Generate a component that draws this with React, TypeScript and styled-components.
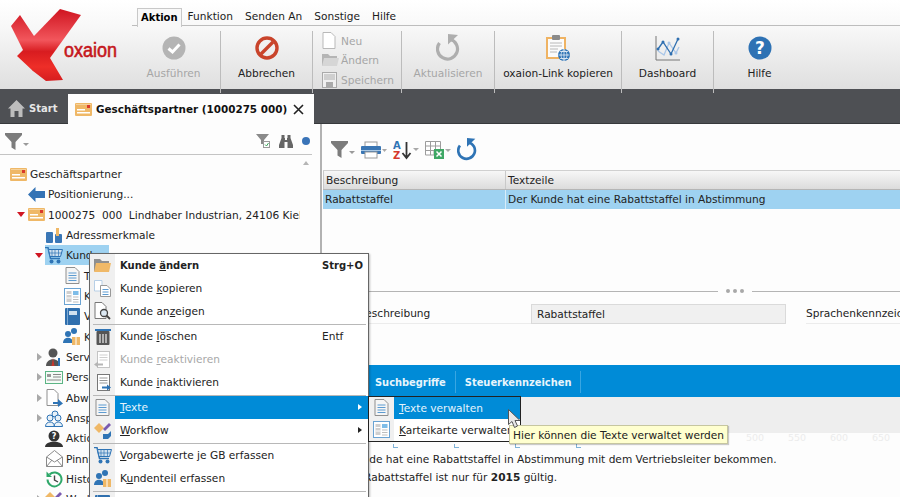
import React from 'react';
import styled, { createGlobalStyle } from 'styled-components';

const GlobalStyle = createGlobalStyle`
  html, body { margin: 0; padding: 0; background: #fdfdfd; }
  body { font-family: "DejaVu Sans", Verdana, sans-serif; font-size: 10.6px; color: #222; }
`;

const Page = styled.div`
  position: relative;
  width: 900px;
  height: 497px;
  overflow: hidden;
  background: #fdfdfd;
`;

/* ribbon */
const Ribbon = styled.div`
  display: flex;
  height: 89px;
  background: linear-gradient(#ffffff 0%, #f8f8f8 30%, #efefef 55%, #dfdfdf 100%);
`;
const LogoBox = styled.div`
  width: 132px;
  flex: none;
`;
const RibbonMain = styled.div`
  flex: 1;
  display: flex;
  flex-direction: column;
`;
const MenuTabs = styled.div`
  height: 26px;
  box-sizing: border-box;
  padding: 8px 0 0 5px;
  display: flex;
  border-bottom: 1px solid #bdbdbd;
`;
const MenuTab = styled.div<{ $active?: boolean }>`
  height: 18px;
  line-height: 17px;
  padding: 0 ${(p) => (p.$active ? '3px' : '6px')};
  font-weight: ${(p) => (p.$active ? 700 : 400)};
  font-size: ${(p) => (p.$active ? '10px' : '10.6px')};
  color: #1c1c1c;
  ${(p) =>
    p.$active &&
    `border: 1px solid #c8c8c8; border-bottom: 0; background: #f8f8f8; color: #000;`}
`;
const ToolRow = styled.div`
  flex: 1;
  display: flex;
  padding: 5px 0 4px;
`;
const Tool = styled.div<{ $width: number; $pr?: number; $off?: boolean }>`
  box-sizing: border-box;
  width: ${(p) => p.$width}px;
  padding: 3px ${(p) => p.$pr ?? 0}px 0 0;
  display: flex;
  flex-direction: column;
  align-items: center;
  color: ${(p) => (p.$off ? '#a6a6a6' : '#222')};
`;
const ToolIcon = styled.div`
  height: 27px;
  margin-bottom: 6px;
  display: flex;
  align-items: center;
  justify-content: center;
`;
const ToolSep = styled.div`
  width: 1px;
  background: #bcbcbc;
  flex: none;
`;
const SmallGroup = styled.div`
  width: 88px;
  padding: 0 0 3px 9px;
  box-sizing: border-box;
  display: flex;
  flex-direction: column;
  justify-content: center;
`;
const SmallTool = styled.div`
  height: 19.5px;
  flex: none;
  display: flex;
  align-items: center;
  color: #a6a6a6;
`;
const SmallIcon = styled.span`
  width: 19px;
  flex: none;
  display: flex;
`;

/* dark tab bar */
const TabBar = styled.div`
  height: 35px;
  box-sizing: border-box;
  background: #4e5054;
  border-bottom: 1px solid #37393c;
  display: flex;
  align-items: flex-end;
`;
const StartTab = styled.div`
  width: 68px;
  height: 30px;
  box-sizing: border-box;
  padding: 1px 0 0 8px;
  display: flex;
  align-items: center;
  gap: 4px;
  font-weight: 700;
  font-size: 10px;
  color: #e6e6e6;
`;
const DocTab = styled.div`
  width: 246px;
  height: 30px;
  margin-bottom: -1px;
  box-sizing: border-box;
  padding: 0 10px 0 7px;
  background: #fdfdfd;
  display: flex;
  align-items: center;
  gap: 4px;
  font-weight: 700;
  font-size: 10.4px;
  color: #111;
`;
const DocTitle = styled.span`
  flex: 1;
  white-space: nowrap;
`;

/* body */
const Body = styled.div`
  display: flex;
  height: 373px;
`;
const LeftPane = styled.div`
  width: 320px;
  flex: none;
  border-right: 2px solid #b2b2b2;
  position: relative;
`;
const LeftBar = styled.div`
  height: 31px;
  box-sizing: border-box;
  margin-right: 8px;
  border-bottom: 1px solid #c4c4c4;
  padding: 4px 2px 0 5px;
  display: flex;
  align-items: center;
  gap: 9px;
`;
const Grow = styled.div`
  flex: 1;
`;
const Dot = styled.span`
  width: 8px;
  height: 8px;
  margin-left: 0;
  border-radius: 50%;
  background: #3a74b8;
`;
const ScrollUp = styled.span`
  position: absolute;
  left: 303px;
  top: 37px;
  width: 0;
  height: 0;
  border: 3.5px solid transparent;
  border-top: 0;
  border-bottom: 4px solid #b5b5b5;
`;
const Tree = styled.div`
  width: 300px;
  overflow: hidden;
  padding-top: 9px;
`;
const TreeRow = styled.div<{ $level: number }>`
  height: 20.33px;
  padding-left: ${(p) => p.$level * 18}px;
  display: flex;
  align-items: center;
  white-space: pre;
`;
const TwistSlot = styled.span`
  width: 9px;
  flex: none;
  display: flex;
`;
const Twist = styled.span<{ $open?: boolean }>`
  width: 0;
  height: 0;
  ${(p) =>
    p.$open
      ? `border: 4px solid transparent; border-top: 5px solid #d01622; border-bottom: 0; margin-left: -1px;`
      : `border: 4px solid transparent; border-left: 5px solid #a9a9a9; border-right: 0; margin-left: 1px;`}
`;
const TreeCell = styled.span<{ $sel?: boolean }>`
  display: flex;
  align-items: center;
  height: 20px;
  ${(p) => p.$sel && `background: #9ed2f1; padding-right: 10px;`}
`;
const TreeIcon = styled.span`
  width: 18px;
  flex: none;
  display: flex;
  justify-content: center;
`;
const TreeLabel = styled.span`
  margin-left: 3px;
`;

const RightPane = styled.div`
  flex: 1;
  min-width: 0;
  overflow: hidden;
  display: flex;
  flex-direction: column;
`;
const ListBar = styled.div`
  height: 46px;
  box-sizing: border-box;
  padding: 5px 0 0 9px;
  display: flex;
  align-items: center;
  gap: 6px;
`;
const ListPane = styled.div`
  height: 115px;
  flex: none;
`;
const GridHead = styled.div`
  display: grid;
  grid-template-columns: 182px 1fr;
  height: 20px;
  box-sizing: border-box;
  border-top: 1px solid #d0d0d0;
  border-bottom: 1px solid #b5b5b5;
  margin-left: 1px;
  background: linear-gradient(#f7f7f7, #dcdcdc);
`;
const HeadCell = styled.div`
  padding-left: 2px;
  line-height: 18px;
  border-left: 1px solid #c9c9c9;
`;
const GridRow = styled.div`
  display: grid;
  grid-template-columns: 182px 1fr;
  height: 19px;
  margin-left: 1px;
  background: #9ed2f1;
`;
const RowCell = styled.div`
  padding-left: 2px;
  line-height: 18px;
  & + & { border-left: 1px solid #d8ecf8; }
`;
const Splitter = styled.div`
  height: 12px;
  flex: none;
  display: flex;
  align-items: center;
  gap: 7px;
  &::before, &::after {
    content: '';
    height: 1px;
    background: #b4b4b4;
  }
  &::before { width: 396px; }
  &::after { flex: 1; }
`;
const SplitDots = styled.div`
  display: flex;
  gap: 3px;
  padding: 0 1px;
`;
const SplitDot = styled.span`
  width: 4px;
  height: 4px;
  border-radius: 50%;
  background: #a8a8a8;
`;
const FormPane = styled.div`
  height: 68px;
  flex: none;
  padding: 7px 0 0 36px;
  box-sizing: border-box;
  display: flex;
  align-items: flex-start;
  white-space: nowrap;
`;
const FormLabel = styled.div`
  width: 173px;
  flex: none;
  height: 19px;
  line-height: 19px;
  border-bottom: 1px solid #ececec;
`;
const FormValue = styled.div`
  width: 255px;
  flex: none;
  height: 20px;
  box-sizing: border-box;
  line-height: 18px;
  padding-left: 5px;
  background: #f0f0f0;
  border: 1px solid #dadada;
  margin-right: 20px;
`;
const BlueTabs = styled.div`
  height: 32px;
  flex: none;
  box-sizing: border-box;
  padding: 6px 0 4px 44px;
  background: #008bd7;
  display: flex;
`;
const BlueTab = styled.div`
  padding: 0 9px 0 9px;
  line-height: 23px;
  font-weight: 700;
  font-size: 9.9px;
  color: #e8f5fc;
  border-right: 1px solid #39a6e2;
`;
const EditorBar = styled.div`
  height: 36px;
  flex: none;
  background: #eeeeee;
`;
const Ruler = styled.div`
  height: 15px;
  flex: none;
  display: grid;
  overflow: hidden;
`;
const RulerNums = styled.div`
  grid-area: 1 / 1;
  padding-left: 412px;
  display: flex;
`;
const RulerNum = styled.span`
  width: 42px;
  flex: none;
  text-align: center;
  font-size: 9.5px;
  line-height: 10px;
  color: #ececec;
`;
const RulerStops = styled.div`
  grid-area: 1 / 1;
  padding: 11px 0 0 71px;
  display: flex;
`;
const RulerStop = styled.span`
  width: 4px;
  height: 3px;
  margin-right: 56px;
  flex: none;
  border-left: 1px solid #7fb2d8;
  border-bottom: 1px solid #7fb2d8;
`;
const Editor = styled.div`
  padding: 2px 0 0 5px;
  line-height: 18px;
  white-space: nowrap;
`;
const EditorLine = styled.div<{ $indent?: number }>`
  padding-left: ${(p) => p.$indent ?? 0}px;
`;

/* context menu */
const Menu = styled.div`
  position: absolute;
  left: 89px;
  top: 253px;
  width: 280px;
  box-sizing: border-box;
  background: #fff;
  border: 1px solid #666;
  box-shadow: 1px 1px 2px rgba(0, 0, 0, 0.25);
  background-image: linear-gradient(90deg, #f0f0f0 25px, transparent 25px);
`;
const SubMenu = styled.div`
  position: absolute;
  left: 368px;
  top: 396px;
  width: 153px;
  box-sizing: border-box;
  background: #fff;
  border: 1px solid #222;
  background-image: linear-gradient(90deg, #f0f0f0 25px, transparent 25px);
`;
const Item = styled.div<{ $sel?: boolean; $off?: boolean; $bold?: boolean }>`
  position: relative;
  height: 23px;
  box-sizing: border-box;
  padding-bottom: 1px;
  display: flex;
  align-items: center;
  white-space: nowrap;
  font-weight: ${(p) => (p.$bold ? 700 : 400)};
  font-size: ${(p) => (p.$bold ? '10px' : '10.6px')};
  color: ${(p) => (p.$off ? '#a8a8a8' : p.$sel ? '#e6f4fc' : '#222')};
  background-image: ${(p) =>
    p.$sel ? 'linear-gradient(90deg, transparent 25px, #008bd7 25px)' : 'none'};
`;
const SubItem = styled(Item)`
  height: 22px;
`;
const ItemIcon = styled.span`
  width: 25px;
  flex: none;
  display: flex;
  justify-content: center;
`;
const ItemText = styled.span`
  margin-left: 5px;
  width: 202px;
  flex: none;
`;
const Arrow = styled.span<{ $sel?: boolean }>`
  position: absolute;
  right: 6px;
  top: 8px;
  width: 0;
  height: 0;
  border: 3.5px solid transparent;
  border-right: 0;
  border-left: 4px solid ${(p) => (p.$sel ? '#fff' : '#222')};
`;
const MenuSep = styled.div`
  height: 2px;
  display: flex;
  align-items: center;
  padding: 0 2px 0 3px;
  &::before {
    content: '';
    flex: 1;
    height: 1px;
    background: #b8b8b8;
  }
`;
const Tooltip = styled.div`
  position: absolute;
  left: 509px;
  top: 425px;
  height: 19px;
  box-sizing: border-box;
  padding: 0 3px 0 3px;
  line-height: 18px;
  background: #ffffcf;
  border: 1px solid #c6c6a0;
  box-shadow: 1px 1px 1px rgba(0, 0, 0, 0.2);
  white-space: nowrap;
`;
const Pointer = styled.div`
  position: absolute;
  left: 508px;
  top: 409px;
  display: flex;
`;

/* icons */
const Logo = () => (
  <svg width="132" height="89" viewBox="0 0 132 89">
    <defs>
      <linearGradient id="lgx" x1="0" y1="0" x2="0" y2="89" gradientUnits="userSpaceOnUse">
        <stop offset="0.1" stopColor="#cf1420" />
        <stop offset="0.45" stopColor="#f2565c" />
        <stop offset="0.58" stopColor="#d81c20" />
        <stop offset="0.75" stopColor="#ee2e28" />
        <stop offset="1" stopColor="#c8141a" />
      </linearGradient>
    </defs>
    <path d="M11 26 L20 15 L34 36 L50 58 L63 80 L46 81 L33 71 L17 56 L23 50 Z" fill="url(#lgx)" />
    <path d="M60 9 L81 15 L50 58 L39 72 L33 71 L23 50 L34 36 Z" fill="url(#lgx)" />
    <text
      x="64"
      y="57"
      fontFamily="Liberation Sans, sans-serif"
      fontSize="20"
      fill="#c5161c"
      stroke="#c5161c"
      strokeWidth="0.6"
      textLength="53"
      lengthAdjust="spacingAndGlyphs"
    >
      oxaion
    </text>
  </svg>
);
const CheckCircle = () => (
  <svg width="24" height="24" viewBox="0 0 24 24">
    <circle cx="12" cy="12" r="11.5" fill="#b4b4b4" />
    <path d="M6.5 12.5l4 3.5 7-7.5" fill="none" stroke="#fff" strokeWidth="3" />
  </svg>
);
const StopCircle = () => (
  <svg width="24" height="24" viewBox="0 0 24 24">
    <circle cx="12" cy="12" r="10" fill="none" stroke="#c9442b" strokeWidth="3.4" />
    <path d="M6 18L18 6" stroke="#c9442b" strokeWidth="3.4" />
  </svg>
);
const Refresh = ({ size, color }: { size: number; color: string }) => (
  <svg width={size} height={(size * 27) / 24} viewBox="0 0 24 27">
    <path d="M14 5.300A10 10 0 1 1 3.500 9" fill="none" stroke={color} strokeWidth="3.2" />
    <path d="M12 0L22 1L12 10.500Z" fill={color} />
  </svg>
);
const Clipboard = () => (
  <svg width="26" height="28" viewBox="0 0 26 28">
    <rect x="1" y="3" width="20" height="22" fill="#efb363" />
    <rect x="3" y="5" width="16" height="18" fill="#fbfbfb" />
    <rect x="7" y="1" width="8" height="5" rx="1" fill="#8a8a8a" />
    <path d="M5 9h12M5 12h12M5 15h8M5 18h7" stroke="#b8b8b8" />
    <circle cx="19" cy="21" r="6" fill="#2f74b5" />
    <path d="M13.5 21h11M19 15.5v11M15 17.5h8M15 24.500h8M19 15.500c-4 3-4 8 0 11M19 15.500c4 3 4 8 0 11" stroke="#fff" strokeWidth="0.7" fill="none" />
  </svg>
);
const Chart = () => (
  <svg width="26" height="26" viewBox="0 0 26 26">
    <path d="M1 1V25H25" fill="none" stroke="#777" />
    <path d="M3 16L9 20L14 8L21 18L24 12" fill="none" stroke="#a9c6e8" strokeWidth="1.3" />
    <path d="M3 14L8 7L16 19L23 4" fill="none" stroke="#2f6fb0" strokeWidth="1.3" />
    <circle cx="3" cy="14" r="1.5" fill="#2f6fb0" />
    <circle cx="8" cy="7" r="1.500" fill="#2f6fb0" />
    <circle cx="16" cy="19" r="1.500" fill="#2f6fb0" />
    <circle cx="23" cy="4" r="1.500" fill="#2f6fb0" />
    <circle cx="21" cy="18" r="1.500" fill="#a9c6e8" />
    <circle cx="14" cy="8" r="1.500" fill="#a9c6e8" />
  </svg>
);
const HelpCircle = () => (
  <svg width="24" height="24" viewBox="0 0 24 24">
    <circle cx="12" cy="12" r="11.500" fill="#2e72b4" />
    <text x="12" y="18" textAnchor="middle" fontFamily="DejaVu Sans, sans-serif" fontWeight="700" fontSize="17" fill="#fff">
      ?
    </text>
  </svg>
);
const SmallDoc = () => (
  <svg width="14" height="17" viewBox="0 0 14 17">
    <path d="M1 .5H9L13 4.500V16.500H1Z" fill="#fff" stroke="#b9b9b9" />
  </svg>
);
const SmallFolder = () => (
  <svg width="17" height="14" viewBox="0 0 17 14">
    <path d="M0 1H6L8 3H15V13H0Z" fill="#b5b5b5" />
    <path d="M2 5H17L15 13H0Z" fill="#d6d6d6" />
  </svg>
);
const SmallSave = () => (
  <svg width="15" height="16" viewBox="0 0 15 16">
    <rect x=".5" y=".5" width="14" height="15" fill="#f0f0f0" stroke="#aaa" />
    <rect x="2" y="2" width="11" height="6" fill="#cfcfcf" />
    <rect x="4" y="10" width="7" height="5" fill="#aaa" />
  </svg>
);
const House = () => (
  <svg width="17" height="17" viewBox="0 0 17 17">
    <path d="M8.500 0L17 8.500H14.500V17H10.500V11H6.500V17H2.500V8.500H0Z" fill="#bdbdbd" />
  </svg>
);
const Card = () => (
  <svg width="17" height="13" viewBox="0 0 17 13">
    <rect width="17" height="13" rx="1" fill="#efb867" />
    <rect x="1" y="1" width="15" height="1" fill="#f6d29c" />
    <rect x="2" y="6" width="8" height="1.500" fill="#fff" />
    <rect x="2" y="9" width="13" height="1.500" fill="#fff" />
    <rect x="12" y="2" width="3" height="3" fill="#d93a2b" />
  </svg>
);
const CloseX = () => (
  <svg width="11" height="11" viewBox="0 0 11 11">
    <path d="M1 1L10 10M10 1L1 10" stroke="#222" strokeWidth="1.600" />
  </svg>
);
const Funnel = ({ size = 17 }: { size?: number }) => (
  <svg width={size + 7} height={size} viewBox="0 0 24 17">
    <path d="M0 0H17V2L10.500 9V17L6.500 14.500V9L0 2Z" fill="#7c7c7c" />
    <path d="M18 10H24L21 13Z" fill="#9a9a9a" />
  </svg>
);
const FilterCheck = () => (
  <svg width="14" height="14" viewBox="0 0 14 14">
    <path d="M0 0H13L8 6V10H5V6Z" fill="#8a8a8a" />
    <rect x="7.500" y="7.500" width="6" height="6" fill="#fff" stroke="#9a9a9a" />
    <path d="M9 10.500l1.500 1.500 2-3" fill="none" stroke="#3ba55c" />
  </svg>
);
const Binoculars = () => (
  <svg width="14" height="14" viewBox="0 0 14 14">
    <path d="M2.500 1H5.500V4H6V6H8V4H8.500V1H11.500V4L14 11V14H8.500V8H5.500V14H0V11L2.500 4Z" fill="#666" />
  </svg>
);
const Printer = () => (
  <svg width="26" height="18" viewBox="0 0 26 18">
    <rect x="4" y="1" width="12" height="5" fill="#fff" stroke="#999" />
    <rect x="0" y="5" width="20" height="8" rx="1" fill="#3a76b4" />
    <rect x="0" y="9" width="20" height="1" fill="#a9c8e4" />
    <rect x="4" y="11" width="12" height="6" fill="#fff" stroke="#999" />
    <path d="M21 8H26L23.500 11Z" fill="#a8a8a8" />
  </svg>
);
const SortAz = () => (
  <svg width="26" height="20" viewBox="0 0 26 20">
    <text x="0" y="9" fontFamily="DejaVu Sans, sans-serif" fontWeight="700" fontSize="10" fill="#2f74b5">
      A
    </text>
    <text x="0" y="19" fontFamily="DejaVu Sans, sans-serif" fontWeight="700" fontSize="10" fill="#d5392b">
      Z
    </text>
    <path d="M13.500 2V17M9.500 13L13.500 18L17.500 13" fill="none" stroke="#333" strokeWidth="1.800" />
    <path d="M20 8H26L23 11Z" fill="#a8a8a8" />
  </svg>
);
const ExcelGrid = () => (
  <svg width="26" height="18" viewBox="0 0 26 18">
    <path d="M.5 .5H15.500V10H9V14H.5ZM5.500 .5V14M10.500 .5V10M.5 5H15.500M.5 9.500H9" fill="#fff" stroke="#9c9c9c" />
    <rect x="9" y="8" width="10" height="10" fill="#3fa765" />
    <path d="M11.500 10.500L16.500 15.500M16.500 10.500L11.500 15.500" stroke="#fff" strokeWidth="1.500" />
    <path d="M20 8H26L23 11Z" fill="#a8a8a8" />
  </svg>
);
const LeftArrow = () => (
  <svg width="17" height="15" viewBox="0 0 17 15">
    <path d="M0 7.500L7.500 0V4H17V11H7.500V15Z" fill="#3473b5" />
  </svg>
);
const Books = () => (
  <svg width="16" height="15" viewBox="0 0 16 15">
    <rect x="0" y="4" width="7" height="11" rx="1" fill="#3a77b6" />
    <rect x="9" y="6" width="7" height="9" rx="1" fill="#3a77b6" />
    <rect x="10" y="0" width="3" height="8" fill="#efb867" />
  </svg>
);
const Cart = () => (
  <svg width="18" height="17" viewBox="0 0 18 17">
    <path d="M0 .5H3L5.500 11.500H15" fill="none" stroke="#2f74b5" strokeWidth="1.500" />
    <path d="M3.500 2.500H17.500L15.500 9.500H5Z" fill="#cfe0ef" stroke="#2f74b5" />
    <path d="M7 3V9M10 3V9M13.500 3V9M4 6H17" stroke="#2f74b5" strokeWidth="0.700" />
    <circle cx="6.500" cy="14.500" r="2" fill="#2f74b5" />
    <circle cx="13.500" cy="14.500" r="2" fill="#2f74b5" />
  </svg>
);
const TextDoc = () => (
  <svg width="15" height="17" viewBox="0 0 15 17">
    <path d="M1 .5H10L14 4.500V16.500H1Z" fill="#f5f5f5" stroke="#8f8f8f" />
    <path d="M3.500 6H11.500M3.500 8.500H11.500M3.500 11H11.500M3.500 13.500H11.500" stroke="#5c9bd1" />
  </svg>
);
const CardDoc = () => (
  <svg width="17" height="17" viewBox="0 0 17 17">
    <rect x=".5" y=".5" width="16" height="16" fill="#fff" stroke="#6aa3d3" />
    <rect x="2.500" y="3" width="5" height="11" fill="#cfcfcf" />
    <path d="M2.500 6.500h5M2.500 10h5" stroke="#fff" />
    <rect x="9" y="3" width="5.500" height="4" fill="#7fbde8" />
    <path d="M9 9h5.500M9 11.500h5.500M9 14h5.500" stroke="#bdbdbd" />
  </svg>
);
const BlueBook = () => (
  <svg width="15" height="17" viewBox="0 0 15 17">
    <rect x="0" y="0" width="15" height="17" rx="1" fill="#2f6fae" />
    <rect x="4" y="3" width="8" height="4" fill="#cfe0ef" />
    <rect x="2" y="0" width="1" height="17" fill="#7ea9d2" />
  </svg>
);
const PeopleGift = () => (
  <svg width="18" height="17" viewBox="0 0 18 17">
    <circle cx="5" cy="6" r="3" fill="#2f74b5" />
    <path d="M0 15c0-7 10-7 10 0Z" fill="#2f74b5" />
    <circle cx="11" cy="3" r="3" fill="#2f74b5" />
    <rect x="9" y="9" width="8" height="8" fill="#efb867" />
    <path d="M13 9V17" stroke="#fff" />
  </svg>
);
const ServiceMan = () => (
  <svg width="18" height="18" viewBox="0 0 18 18">
    <circle cx="8" cy="5" r="4.500" fill="#555" />
    <path d="M1 18c0-9 14-9 14 0Z" fill="#555" />
    <path d="M8 10l-1.500 8h3Z" fill="#c8362b" />
    <path d="M14 10v8" stroke="#2f74b5" strokeWidth="2" />
  </svg>
);
const GreenCard = () => (
  <svg width="18" height="13" viewBox="0 0 18 13">
    <rect x=".5" y=".5" width="17" height="12" fill="#f4fbf6" stroke="#5cb585" />
    <rect x="2" y="3" width="4" height="3" fill="#999" />
    <path d="M8 3.500h8M8 6h8M2 9h14" stroke="#888" />
  </svg>
);
const DocArrow = () => (
  <svg width="17" height="18" viewBox="0 0 17 18">
    <path d="M1 .5H8L12 4.500V16.500H1Z" fill="#fff" stroke="#8f8f8f" />
    <path d="M7 13h5V10l5 4.500-5 3.500v-3H7Z" fill="#2f74b5" />
  </svg>
);
const PeopleOutline = () => (
  <svg width="18" height="17" viewBox="0 0 18 17">
    <circle cx="10" cy="4" r="3" fill="#e8f1f8" stroke="#2f74b5" />
    <circle cx="5" cy="8" r="3" fill="#e8f1f8" stroke="#2f74b5" />
    <circle cx="13" cy="8" r="3" fill="#e8f1f8" stroke="#2f74b5" />
    <path d="M.5 16.500c0-6 9-6 9 0ZM9 16.500c0-6 8.500-6 8.500 0Z" fill="#e8f1f8" stroke="#2f74b5" />
  </svg>
);
const DarkPerson = () => (
  <svg width="18" height="17" viewBox="0 0 18 17">
    <circle cx="9" cy="6" r="5.500" fill="#333" />
    <path d="M0 17c0-7 18-7 18 0Z" fill="#333" />
    <text x="9" y="9" textAnchor="middle" fontFamily="DejaVu Sans, sans-serif" fontSize="8" fontWeight="700" fill="#fff">
      ?
    </text>
  </svg>
);
const OpenMail = () => (
  <svg width="17" height="17" viewBox="0 0 17 17">
    <path d="M.5 7L8.500 .5L16.500 7V16.500H.5Z" fill="#fff" stroke="#8a8a8a" />
    <path d="M.5 7L8.500 12L16.500 7M.5 16.500L6 10M16.500 16.500L11 10" fill="none" stroke="#8a8a8a" />
  </svg>
);
const HistoryClock = () => (
  <svg width="17" height="17" viewBox="0 0 17 17">
    <path d="M3.500 3.500A7 7 0 1 1 1.500 8.500" fill="none" stroke="#2fa86a" strokeWidth="2" />
    <path d="M.5 .5V6H6Z" fill="#2fa86a" />
    <path d="M8.500 4.500V9L12 11" fill="none" stroke="#444" strokeWidth="1.400" />
  </svg>
);
const Workflow = () => (
  <svg width="18" height="17" viewBox="0 0 18 17">
    <path d="M0 6L5 1L10 6L5 11Z" fill="#efb867" />
    <path d="M9 7L15 1L17 3L11 9Z" fill="#7a5bb0" />
    <path d="M9 12H14L17 9V14L14 17H9Z" fill="#2f74b5" />
  </svg>
);
const OpenFolder = () => (
  <svg width="17" height="14" viewBox="0 0 17 14">
    <path d="M0 1H6L8 3H15V13H0Z" fill="#8f8f8f" />
    <path d="M2 5H17L15 14H0Z" fill="#f0b968" />
  </svg>
);
const CopyDocs = () => (
  <svg width="17" height="17" viewBox="0 0 17 17">
    <path d="M.5 .5H8V11H.5Z" fill="#fff" stroke="#b7cfe6" />
    <path d="M6.500 5.500H13L16.500 9V16.500H6.500Z" fill="#fff" stroke="#999" />
    <path d="M8.500 9.500H14.500M8.500 12H14.500M8.500 14.500H14.500" stroke="#5c9bd1" />
  </svg>
);
const DocSearch = () => (
  <svg width="17" height="18" viewBox="0 0 17 18">
    <path d="M1 .5H8L12 4.500V16.500H1Z" fill="#fff" stroke="#777" />
    <circle cx="10" cy="11" r="3.500" fill="#dce9f4" stroke="#444" strokeWidth="1.300" />
    <path d="M12.500 13.500L16 17" stroke="#444" strokeWidth="1.800" />
  </svg>
);
const Trash = () => (
  <svg width="16" height="17" viewBox="0 0 16 17">
    <rect x="0" y="1" width="16" height="2" fill="#2f74b5" />
    <rect x="1.500" y="3" width="13" height="14" rx="1" fill="#555" />
    <path d="M5 6V15M8 6V15M11 6V15" stroke="#eee" strokeWidth="1.200" />
  </svg>
);
const DocBack = ({ off }: { off?: boolean }) => (
  <svg width="17" height="17" viewBox="0 0 17 17">
    <rect x="3.500" y=".5" width="12" height="16" fill="#fff" stroke={off ? '#c4c4c4' : '#777'} />
    <path d="M5.500 4H13.500M5.500 6.500H13.500M5.500 9H13.500" stroke={off ? '#cfcfcf' : '#999'} />
    <path d={off ? 'M0 13.500L4 10.500V12.500H9V14.500H4V16.500Z' : 'M8 12.500H13V10.500L17 13.500L13 16.500V14.500H8Z'} fill={off ? '#b5b5b5' : '#2f74b5'} />
  </svg>
);

const Mouse = () => (
  <svg width="14" height="21" viewBox="0 0 14 21">
    <path d="M.5 .5V15.500L4 12.500L6.500 18.500L9.500 17L7 11.500H12Z" fill="#e8e8e8" stroke="#555" />
  </svg>
);

const treeRows: { level: number; icon: React.ReactNode; label: string; twist?: 'open' | 'closed'; sel?: boolean }[] = [
  { level: 0, icon: <Card />, label: 'Geschäftspartner' },
  { level: 1, icon: <LeftArrow />, label: 'Positionierung...' },
  { level: 1, icon: <Card />, label: '1000275  000  Lindhaber Industrian, 24106 Kiel', twist: 'open' },
  { level: 2, icon: <Books />, label: 'Adressmerkmale' },
  { level: 2, icon: <Cart />, label: 'Kunde', twist: 'open', sel: true },
  { level: 3, icon: <TextDoc />, label: 'Texte' },
  { level: 3, icon: <CardDoc />, label: 'Karteikarte' },
  { level: 3, icon: <BlueBook />, label: 'Vorgabewerte' },
  { level: 3, icon: <PeopleGift />, label: 'Kundenteil' },
  { level: 2, icon: <ServiceMan />, label: 'Servicepartner', twist: 'closed' },
  { level: 2, icon: <GreenCard />, label: 'Personenkonto', twist: 'closed' },
  { level: 2, icon: <DocArrow />, label: 'Abweichende Anschrift', twist: 'closed' },
  { level: 2, icon: <PeopleOutline />, label: 'Ansprechpartner', twist: 'closed' },
  { level: 2, icon: <DarkPerson />, label: 'Aktionen' },
  { level: 2, icon: <OpenMail />, label: 'Pinnwand' },
  { level: 2, icon: <HistoryClock />, label: 'Historie' },
  { level: 2, icon: <Workflow />, label: 'Workflow', twist: 'closed' },
];

export default function App() {
  return (
    <Page>
      <GlobalStyle />
      <Ribbon>
        <LogoBox>
          <Logo />
        </LogoBox>
        <RibbonMain>
          <MenuTabs>
            <MenuTab $active>Aktion</MenuTab>
            <MenuTab>Funktion</MenuTab>
            <MenuTab>Senden An</MenuTab>
            <MenuTab>Sonstige</MenuTab>
            <MenuTab>Hilfe</MenuTab>
          </MenuTabs>
          <ToolRow>
            <Tool $width={88} $pr={5} $off>
              <ToolIcon>
                <CheckCircle />
              </ToolIcon>
              Ausführen
            </Tool>
            <ToolSep />
            <Tool $width={91}>
              <ToolIcon>
                <StopCircle />
              </ToolIcon>
              Abbrechen
            </Tool>
            <ToolSep />
            <SmallGroup>
              <SmallTool>
                <SmallIcon>
                  <SmallDoc />
                </SmallIcon>
                Neu
              </SmallTool>
              <SmallTool>
                <SmallIcon>
                  <SmallFolder />
                </SmallIcon>
                Ändern
              </SmallTool>
              <SmallTool>
                <SmallIcon>
                  <SmallSave />
                </SmallIcon>
                Speichern
              </SmallTool>
            </SmallGroup>
            <ToolSep />
            <Tool $width={92} $off>
              <ToolIcon>
                <Refresh size={24} color="#aeaeae" />
              </ToolIcon>
              Aktualisieren
            </Tool>
            <ToolSep />
            <Tool $width={126}>
              <ToolIcon>
                <Clipboard />
              </ToolIcon>
              oxaion-Link kopieren
            </Tool>
            <ToolSep />
            <Tool $width={91}>
              <ToolIcon>
                <Chart />
              </ToolIcon>
              Dashboard
            </Tool>
            <ToolSep />
            <Tool $width={91}>
              <ToolIcon>
                <HelpCircle />
              </ToolIcon>
              Hilfe
            </Tool>
          </ToolRow>
        </RibbonMain>
      </Ribbon>

      <TabBar>
        <StartTab>
          <House />
          Start
        </StartTab>
        <DocTab>
          <Card />
          <DocTitle>Geschäftspartner (1000275 000)</DocTitle>
          <CloseX />
        </DocTab>
      </TabBar>

      <Body>
        <LeftPane>
          <LeftBar>
            <Funnel size={17} />
            <Grow />
            <FilterCheck />
            <Binoculars />
            <Dot />
          </LeftBar>
          <ScrollUp />
          <Tree>
            {treeRows.map((r) => (
              <TreeRow key={r.label} $level={r.level}>
                <TwistSlot>{r.twist && <Twist $open={r.twist === 'open'} />}</TwistSlot>
                <TreeCell $sel={r.sel}>
                  <TreeIcon>{r.icon}</TreeIcon>
                  <TreeLabel>{r.label}</TreeLabel>
                </TreeCell>
              </TreeRow>
            ))}
          </Tree>
        </LeftPane>

        <RightPane>
          <ListBar>
            <Funnel size={17} />
            <Printer />
            <SortAz />
            <ExcelGrid />
            <Refresh size={20} color="#2f74b5" />
          </ListBar>
          <ListPane>
            <GridHead>
              <HeadCell>Beschreibung</HeadCell>
              <HeadCell>Textzeile</HeadCell>
            </GridHead>
            <GridRow>
              <RowCell>Rabattstaffel</RowCell>
              <RowCell>Der Kunde hat eine Rabattstaffel in Abstimmung</RowCell>
            </GridRow>
          </ListPane>
          <Splitter>
            <SplitDots>
              <SplitDot />
              <SplitDot />
              <SplitDot />
            </SplitDots>
          </Splitter>
          <FormPane>
            <FormLabel>Beschreibung</FormLabel>
            <FormValue>Rabattstaffel</FormValue>
            <FormLabel>Sprachenkennzeichen</FormLabel>
          </FormPane>
          <BlueTabs>
            <BlueTab>Suchbegriffe</BlueTab>
            <BlueTab>Steuerkennzeichen</BlueTab>
          </BlueTabs>
          <EditorBar />
          <Ruler>
            <RulerNums>
              <RulerNum>500</RulerNum>
              <RulerNum>550</RulerNum>
              <RulerNum>600</RulerNum>
              <RulerNum>650</RulerNum>
            </RulerNums>
            <RulerStops>
              <RulerStop />
              <RulerStop />
              <RulerStop />
              <RulerStop />
            </RulerStops>
          </Ruler>
          <Editor>
            <EditorLine>Der Kunde hat eine Rabattstaffel in Abstimmung mit dem Vertriebsleiter bekommen.</EditorLine>
            <EditorLine $indent={4}>
              Diese Rabattstaffel ist nur für <b>2015</b> gültig.
            </EditorLine>
          </Editor>
        </RightPane>
      </Body>

      <Menu>
        <Item $bold>
          <ItemIcon><OpenFolder /></ItemIcon>
          <ItemText>Kunde <u>ä</u>ndern</ItemText>
          Strg+O
        </Item>
        <Item>
          <ItemIcon><CopyDocs /></ItemIcon>
          <ItemText>Kunde <u>k</u>opieren</ItemText>
        </Item>
        <Item>
          <ItemIcon><DocSearch /></ItemIcon>
          <ItemText>Kunde an<u>z</u>eigen</ItemText>
        </Item>
        <MenuSep />
        <Item>
          <ItemIcon><Trash /></ItemIcon>
          <ItemText>Kunde <u>l</u>öschen</ItemText>
          Entf
        </Item>
        <Item $off>
          <ItemIcon><DocBack off /></ItemIcon>
          <ItemText>Kunde <u>r</u>eaktivieren</ItemText>
        </Item>
        <Item>
          <ItemIcon><DocBack /></ItemIcon>
          <ItemText>Kunde <u>i</u>naktivieren</ItemText>
        </Item>
        <MenuSep />
        <Item $sel>
          <ItemIcon><TextDoc /></ItemIcon>
          <ItemText><u>T</u>exte</ItemText>
          <Arrow $sel />
        </Item>
        <Item>
          <ItemIcon><Workflow /></ItemIcon>
          <ItemText><u>W</u>orkflow</ItemText>
          <Arrow />
        </Item>
        <MenuSep />
        <Item>
          <ItemIcon><Cart /></ItemIcon>
          <ItemText><u>V</u>orgabewerte je GB erfassen</ItemText>
        </Item>
        <Item>
          <ItemIcon><PeopleGift /></ItemIcon>
          <ItemText>K<u>u</u>ndenteil erfassen</ItemText>
        </Item>
        <MenuSep />
        <Item>
          <ItemIcon><BlueBook /></ItemIcon>
        </Item>
      </Menu>

      <SubMenu>
        <SubItem $sel>
          <ItemIcon><TextDoc /></ItemIcon>
          <ItemText><u>T</u>exte verwalten</ItemText>
        </SubItem>
        <SubItem>
          <ItemIcon><CardDoc /></ItemIcon>
          <ItemText><u>K</u>arteikarte verwalten</ItemText>
        </SubItem>
      </SubMenu>
      <Tooltip>Hier können die Texte verwaltet werden</Tooltip>
      <Pointer>
        <Mouse />
      </Pointer>
    </Page>
  );
}
